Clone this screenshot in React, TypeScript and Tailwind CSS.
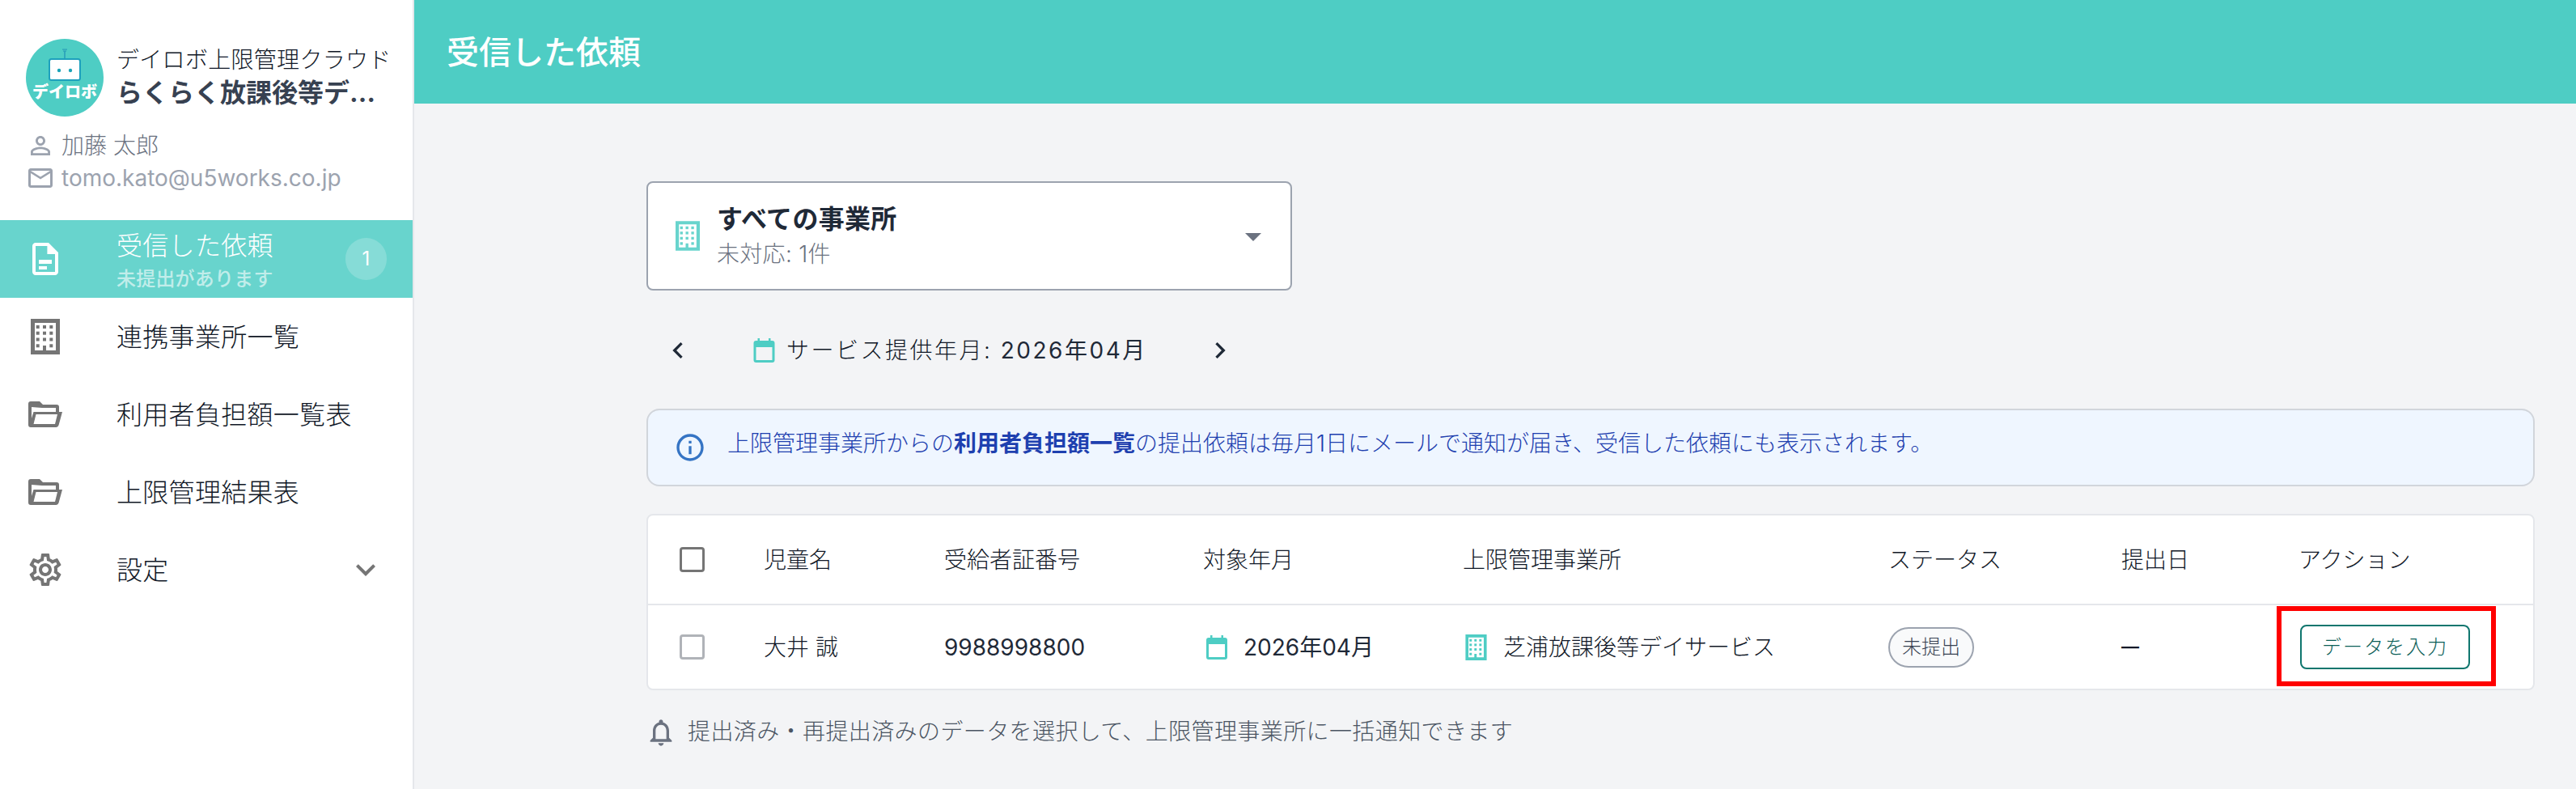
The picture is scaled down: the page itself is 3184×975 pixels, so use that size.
const BuildingIcon = ({ className, color }: { className: string; color: string }) => (
  <svg viewBox="0 0 36 44" className={className} fill={color}>
    <path
      fillRule="evenodd"
      d="M0 0h36v44H0zM5 5v34h10V33h4v6h12V5z"
    />
    {[10, 17.7, 25.5].map((y) =>
      [8.7, 17, 25.3].map((x) => <rect key={`${x}-${y}`} x={x - 2} y={y - 2} width="4" height="4" />)
    )}
    <rect x="6.7" y="31.3" width="4" height="4" />
    <rect x="23.3" y="31.3" width="4" height="4" />
  </svg>
);

const FolderIcon = () => (
  <svg viewBox="0 0 42 32" className="w-[42px] h-8" fill="#757575">
    <path
      fillRule="evenodd"
      d="M3 0h11l4 4h17a3 3 0 0 1 3 3v6h4l-4.5 16.5A3.500 3.500 0 0 1 34 32H3a3 3 0 0 1-3-3V3a3 3 0 0 1 3-3zM9.500 16L6.500 28H33l3-12zM4 7v14l2.500-8H34V8H17z"
    />
  </svg>
);

const CalendarIcon = ({ className }: { className: string }) => (
  <svg viewBox="0 0 26 30" className={className} fill="#4ecdc4">
    <path
      fillRule="evenodd"
      d="M5 0h2.500v3h11V0H21v3h2a3 3 0 0 1 3 3v21a3 3 0 0 1-3 3H3a3 3 0 0 1-3-3V6a3 3 0 0 1 3-3h2zM3 11v16h20V11z"
    />
  </svg>
);

const Mui = ({ d, className, color = '#757575' }: { d: string; className: string; color?: string }) => (
  <svg viewBox="0 0 24 24" className={className} fill={color}>
    <path d={d} />
  </svg>
);

const ICONS = {
  person:
    'M12 5.9c1.16 0 2.1.94 2.1 2.1s-.94 2.1-2.1 2.1S9.9 9.16 9.9 8s.94-2.1 2.1-2.1m0 9c2.97 0 6.1 1.46 6.1 2.1v1.1H5.9V17c0-.64 3.13-2.1 6.1-2.1M12 4C9.79 4 8 5.790 8 8s1.79 4 4 4 4-1.79 4-4-1.79-4-4-4zm0 9c-2.67 0-8 1.34-8 4v3h16v-3c0-2.66-5.33-4-8-4z',
  mail: 'M20 4H4c-1.1 0-1.99.9-1.99 2L2 18c0 1.1.9 2 2 2h16c1.1 0 2-.9 2-2V6c0-1.1-.9-2-2-2zm0 14H4V8l8 5 8-5v10zm-8-7L4 6h16l-8 5z',
  doc: 'M14 2H6c-1.1 0-2 .9-2 2v16c0 1.100.9 2 2 2h12c1.100 0 2-.9 2-2V8l-6-6zM6 20V4h7.200v5H18v11zM8 12.500h8V15H8zM8 16.500h5V18.500H8z',
  gear: 'M19.43 12.98c.04-.32.07-.64.07-.98 0-.34-.03-.66-.07-.98l2.11-1.65c.19-.15.24-.42.12-.64l-2-3.46c-.09-.16-.26-.25-.44-.25-.06 0-.12.01-.17.03l-2.49 1c-.52-.4-1.08-.73-1.69-.98l-.38-2.65C14.46 2.18 14.25 2 14 2h-4c-.25 0-.46.18-.49.42l-.38 2.65c-.61.25-1.17.59-1.69.98l-2.49-1c-.06-.02-.12-.03-.18-.03-.17 0-.34.09-.43.25l-2 3.46c-.13.22-.07.49.12.64l2.11 1.65c-.04.32-.07.65-.07.98 0 .33.03.66.07.98l-2.11 1.65c-.19.15-.24.42-.12.64l2 3.46c.09.16.26.25.44.25.06 0 .12-.01.17-.03l2.49-1c.52.4 1.08.73 1.69.98l.38 2.65c.03.24.24.42.49.42h4c.25 0 .46-.18.49-.42l.38-2.65c.61-.25 1.17-.59 1.69-.98l2.49 1c.06.02.12.03.18.03.17 0 .34-.09.43-.25l2-3.46c.12-.22.07-.49-.12-.64l-2.11-1.65zm-1.98-1.71c.04.31.05.52.05.73 0 .21-.02.43-.05.73l-.14 1.13.89.7 1.08.84-.7 1.21-1.27-.51-1.04-.42-.9.68c-.43.32-.84.56-1.25.73l-1.06.43-.16 1.13-.2 1.35h-1.4l-.19-1.35-.16-1.13-1.06-.43c-.43-.18-.83-.41-1.23-.71l-.91-.7-1.06.43-1.27.51-.7-1.21 1.08-.84.89-.7-.14-1.13c-.03-.31-.05-.54-.05-.74s.02-.43.05-.73l.14-1.13-.89-.7-1.08-.84.7-1.21 1.27.51 1.04.42.9-.68c.43-.32.84-.56 1.25-.73l1.06-.43.16-1.13.2-1.35h1.39l.19 1.35.16 1.13 1.06.43c.43.18.83.41 1.23.71l.91.7 1.06-.43 1.27-.51.7 1.21-1.07.85-.89.7.14 1.13zM12 8c-2.21 0-4 1.79-4 4s1.79 4 4 4 4-1.79 4-4-1.79-4-4-4zm0 6c-1.1 0-2-.9-2-2s.9-2 2-2 2 .9 2 2-.9 2-2 2z',
  expand: 'M16.59 8.59L12 13.17 7.41 8.59 6 10l6 6 6-6z',
  dropdown: 'M7 10l5 5 5-5z',
  left: 'M15.41 7.41L14 6l-6 6 6 6 1.41-1.41L10.83 12z',
  right: 'M10 6L8.59 7.41 13.17 12l-4.58 4.59L10 18l6-6z',
  info: 'M11 7h2v2h-2zm0 4h2v6h-2zm1-9C6.48 2 2 6.48 2 12s4.48 10 10 10 10-4.48 10-10S17.52 2 12 2zm0 18c-4.41 0-8-3.59-8-8s3.59-8 8-8 8 3.59 8 8-3.59 8-8 8z',
  bell: 'M12 22c1.1 0 2-.9 2-2h-4c0 1.1.9 2 2 2zm6-6v-5c0-3.07-1.63-5.64-4.5-6.32V4c0-.83-.67-1.5-1.5-1.5s-1.5.67-1.5 1.5v.68C7.64 5.36 6 7.92 6 11v5l-2 2v1h16v-1l-2-2zm-2 1H8v-6c0-2.48 1.51-4.5 4-4.5s4 2.02 4 4.5v6z',
};

function Logo() {
  return (
    <div className="relative w-24 h-24 shrink-0 rounded-full bg-[#4ecdc4] flex flex-col items-center overflow-hidden">
      <svg viewBox="0 0 44 40" className="w-11 h-10 mt-[12px] shrink-0">
        <rect x="21.200" y="3" width="1.600" height="10" fill="#2a9fb8" />
        <rect x="19" y="0.500" width="6" height="1.200" fill="#2a9fb8" />
        <rect x="20" y="2.500" width="4" height="1.200" fill="#2a9fb8" />
        <rect x="3" y="13" width="38" height="26" rx="2.500" fill="#fff" stroke="#1ea0bd" strokeWidth="2" />
        <circle cx="15" cy="27" r="2.200" fill="#1aa3b8" />
        <circle cx="29" cy="27" r="2.200" fill="#1aa3b8" />
      </svg>
      <span className="mt-[2px] text-[20px] leading-[24px] font-black text-white whitespace-nowrap">デイロボ</span>
    </div>
  );
}

function NavItem({ icon, label, trailing }: { icon: React.ReactNode; label: string; trailing?: React.ReactNode }) {
  return (
    <div className="h-24 flex items-center pl-8 pr-[34px]">
      <div className="w-12 h-12 flex items-center justify-center shrink-0">{icon}</div>
      <span className="ml-[64px] flex-1 pt-[2px] text-[32px] leading-none font-light tracking-[0.3px] text-[#111827] whitespace-nowrap">{label}</span>
      {trailing}
    </div>
  );
}

function Sidebar() {
  return (
    <aside className="w-[512px] shrink-0 h-full bg-white border-r-2 border-[#e5e7eb]">
      <div className="pt-12 pl-8 flex gap-4">
        <Logo />
        <div className="w-[336px] pt-[6px]">
          <div className="text-[28px] leading-[40px] font-light tracking-[0.3px] text-[#111827] whitespace-nowrap">デイロボ上限管理クラウド</div>
          <div className="text-[32px] leading-[42px] font-bold text-[#374151] truncate">らくらく放課後等デイサービス</div>
        </div>
      </div>
      <div className="mt-4 pl-8 text-[28px] text-[#9ca3af]">
        <div className="h-10 flex items-center gap-2">
          <Mui d={ICONS.person} className="w-9 h-9" color="#9ca3af" />
          <span className="font-light text-[#6b7280]">加藤 太郎</span>
        </div>
        <div className="h-10 flex items-center gap-2">
          <Mui d={ICONS.mail} className="w-9 h-9" color="#9ca3af" />
          <span>tomo.kato@u5works.co.jp</span>
        </div>
      </div>
      <nav className="mt-8">
        <div className="h-24 flex items-center pl-8 pr-[32px] bg-[#68d4cd]">
          <Mui d={ICONS.doc} className="w-12 h-12 shrink-0" color="#fff" />
          <div className="ml-[64px] flex-1 pt-[7px]">
            <div className="text-[32px] leading-[40px] font-light tracking-[0.3px] text-white">受信した依頼</div>
            <div className="mt-[3px] text-[24px] leading-[36px] font-medium tracking-[0.2px] text-white/60">未提出があります</div>
          </div>
          <div className="w-[51px] h-[52px] rounded-full bg-white/20 flex items-center justify-center text-[24px] text-white">1</div>
        </div>
        <NavItem icon={<BuildingIcon className="w-9 h-11" color="#757575" />} label="連携事業所一覧" />
        <NavItem icon={<FolderIcon />} label="利用者負担額一覧表" />
        <NavItem icon={<FolderIcon />} label="上限管理結果表" />
        <NavItem icon={<Mui d={ICONS.gear} className="w-12 h-12" />} label="設定" trailing={<Mui d={ICONS.expand} className="w-12 h-12" />} />
      </nav>
    </aside>
  );
}

const GRID = 'grid grid-cols-[143px_223px_320px_321px_526px_288px_223px_1fr] items-center';

function Checkbox({ color }: { color: string }) {
  return (
    <div className={`ml-[39px] w-[31px] h-[31px] rounded-[4px] border-[3px] bg-white ${color}`} />
  );
}

function RequestTable() {
  return (
    <div className="mt-[34px] bg-white border-2 border-[#e5e7eb] rounded-lg text-[28px] text-[#111827]">
      <div className={`${GRID} h-[111px] border-b-2 border-[#e5e7eb] font-light`}>
        <Checkbox color="border-[#757575]" />
        <span>児童名</span>
        <span>受給者証番号</span>
        <span>対象年月</span>
        <span>上限管理事業所</span>
        <span>ステータス</span>
        <span>提出日</span>
        <span className="-ml-1">アクション</span>
      </div>
      <div className={`${GRID} h-[103px]`}>
        <Checkbox color="border-[#b0b3b8]" />
        <span className="font-light">大井 誠</span>
        <span className="text-[#1f2937]">9988998800</span>
        <div className="flex items-center pl-1 gap-5 text-[#1f2937]">
          <CalendarIcon className="w-[26px] h-[30px]" />
          <span>2026年04月</span>
        </div>
        <div className="flex items-center pl-[3px] gap-5">
          <BuildingIcon className="w-[27px] h-8" color="#4ecdc4" />
          <span className="font-light">芝浦放課後等デイサービス</span>
        </div>
        <div>
          <span className="inline-flex items-center justify-center w-[106px] h-[50px] rounded-full border-2 border-[#9ca3af] bg-[#f9fafb] text-[24px] font-light text-[#374151]">未提出</span>
        </div>
        <span className="text-[22px] font-semibold">—</span>
        <div className="relative w-[210px] -ml-[2px] h-[55px]">
          <button className="w-full h-full rounded-lg border-2 border-[#0f766e] bg-white text-[24px] font-light tracking-[2px] text-[#0b5e57]">データを入力</button>
          <div className="absolute -left-[29px] -right-[32px] -top-[23px] -bottom-[21px] border-[6px] border-[#ff0000]" />
        </div>
      </div>
    </div>
  );
}

export default function App() {
  return (
    <div className="flex w-[3184px] h-[975px] overflow-hidden bg-[#f3f4f6] font-['Inter','Noto_Sans_CJK_JP',sans-serif]">
      <Sidebar />
      <main className="flex-1 flex flex-col">
        <header className="h-32 shrink-0 bg-[#4ecdc4] flex items-center pl-10">
          <h1 className="text-[40px] leading-none font-medium text-white pt-[2px]">受信した依頼</h1>
        </header>
        <div className="pl-[287px] pr-[51px] pt-24">
          <div className="w-[798px] h-[135px] bg-white border-2 border-[#9ca3af] rounded-lg flex items-center pl-[34px] pr-[22px]">
            <BuildingIcon className="w-[30px] h-[37px] shrink-0" color="#68d4cd" />
            <div className="ml-[21px] flex-1">
              <div className="text-[32px] leading-[44px] font-bold tracking-[0.3px] text-[#1f2937]">すべての事業所</div>
              <div className="text-[28px] leading-[42px] font-light tracking-[0.3px] text-[#6b7280]">未対応: 1件</div>
            </div>
            <Mui d={ICONS.dropdown} className="w-12 h-12" color="#6b7280" />
          </div>
          <div className="mt-[34px] h-20 flex items-center pl-[19px] text-[28px] text-[#1f2937]">
            <Mui d={ICONS.left} className="w-10 h-10" color="#1f2937" />
            <CalendarIcon className="ml-[73px] w-[27px] h-[30px]" />
            <span className="ml-[14px] w-[516px] tracking-[2.5px]">
              <span className="font-light text-[#111827]">サービス提供年月:</span> 2026年04月
            </span>
            <Mui d={ICONS.right} className="w-10 h-10" color="#1f2937" />
          </div>
          <div className="mt-8 h-[96px] bg-[#eff6ff] border-2 border-[#d1d5db] rounded-2xl flex items-center pl-[32px] text-[28px] text-[#1e40af]">
            <Mui d={ICONS.info} className="w-10 h-10 shrink-0" color="#3574c4" />
            <span className="ml-[26px] -mt-[10px] font-light">
              上限管理事業所からの<strong className="font-bold text-[#1e40af]">利用者負担額一覧</strong>の提出依頼は毎月1日にメールで通知が届き、受信した依頼にも表示されます。
            </span>
          </div>
          <RequestTable />
          <div className="mt-[32px] h-10 flex items-center gap-[13px] text-[28px] text-[#4b5563] -ml-[2px]">
            <Mui d={ICONS.bell} className="w-10 h-10" color="#6b7280" />
            <span className="-mt-[2px] font-light tracking-[0.4px]">提出済み・再提出済みのデータを選択して、上限管理事業所に一括通知できます</span>
          </div>
        </div>
      </main>
    </div>
  );
}
